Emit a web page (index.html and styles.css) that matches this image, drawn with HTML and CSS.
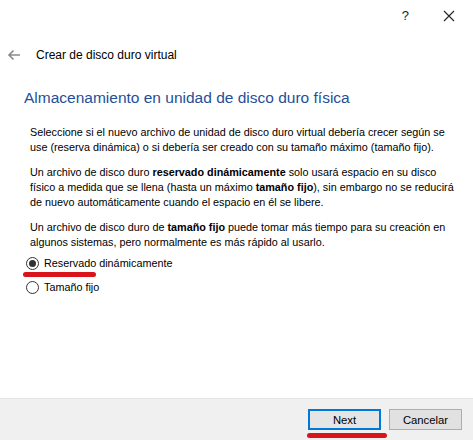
FILE: index.html
```html
<!DOCTYPE html>
<html lang="es">

<head>
  <meta charset="UTF-8" />
  <title>Crear de disco duro virtual</title>
  <link rel="stylesheet" href="styles.css">
</head>

<body>

  <div class="wizard">
    <div class="titlebar">
      <span class="help">?</span>
      <span class="close">
        <svg width="12" height="12" viewBox="0 0 12 12">
          <path d="M1 1 L11 11 M11 1 L1 11" stroke="#222" stroke-width="1.1" fill="none" />
        </svg>
      </span>
    </div>

    <div class="header">
      <span class="back">
        <svg width="14" height="12" viewBox="0 0 14 12">
          <path d="M13 6 H2 M6.5 1.5 L2 6 L6.5 10.5" stroke="#8a8a8a" stroke-width="1.6" fill="none" />
        </svg>
      </span>
      <span class="header-title">Crear de disco duro virtual</span>
    </div>

    <div class="page">
      <h1>Almacenamiento en unidad de disco duro física</h1>

      <div class="text">
        <p>Seleccione si el nuevo archivo de unidad de disco duro virtual debería crecer según se<br>
          use (reserva dinámica) o si debería ser creado con su tamaño máximo (tamaño fijo).</p>
        <p>Un archivo de disco duro <b>reservado dinámicamente</b> solo usará espacio en su disco<br>
          físico a medida que se llena (hasta un máximo <b>tamaño fijo</b>), sin embargo no se reducirá<br>
          de nuevo automáticamente cuando el espacio en él se libere.</p>
        <p>Un archivo de disco duro de <b>tamaño fijo</b> puede tomar más tiempo para su creación en<br>
          algunos sistemas, pero normalmente es más rápido al usarlo.</p>
      </div>

      <div class="options">
        <label class="option marked">
          <span class="radio checked"></span>
          <span>Reservado dinámicamente</span>
        </label>
        <label class="option">
          <span class="radio"></span>
          <span>Tamaño fijo</span>
        </label>
      </div>
    </div>

    <div class="footer">
      <button class="btn primary marked">Next</button>
      <button class="btn">Cancelar</button>
    </div>
  </div>

</body>

</html>
```

FILE: styles.css
```css
body {
  margin: 0;
  padding: 0;
  background: #ffffff;
  font-family: 'Liberation Sans', Arial, sans-serif;
  color: #000;
}

.wizard {
  width: 473px;
  height: 440px;
  display: flex;
  flex-direction: column;
}

.titlebar {
  height: 31px;
  display: flex;
  justify-content: flex-end;
  align-items: center;
  gap: 34px;
  padding: 0 18px 0 0;
}

.help {
  font-size: 13px;
  color: #222;
}

.close {
  display: flex;
}

.header {
  display: flex;
  align-items: center;
  gap: 15px;
  padding: 14px 0 0 7px;
  height: 20px;
}

.back {
  display: flex;
}

.header-title {
  font-size: 12px;
}

.page {
  flex: 1;
  padding: 0 10px 0 24px;
}

h1 {
  margin: 23px 0 0 0;
  font-size: 15.5px;
  line-height: 19px;
  font-weight: normal;
  color: #1f4f98;
}

.text {
  margin: 18px 0 0 6px;
  font-size: 10.8px;
  line-height: 15px;
  white-space: nowrap;
}

.text p {
  margin: 0 0 10px 0;
}

.text p:last-child {
  margin-bottom: 6px;
}

.text b {
  font-weight: bold;
}

.options {
  display: flex;
  flex-direction: column;
  gap: 10px;
}

.option {
  display: flex;
  align-items: center;
  gap: 5px;
  font-size: 10.8px;
  line-height: 14px;
  position: relative;
}

.radio {
  width: 11px;
  height: 11px;
  border: 1px solid #333;
  border-radius: 50%;
  background: #fff;
  display: flex;
  align-items: center;
  justify-content: center;
  margin-left: 2px;
}

.radio.checked::after {
  content: '';
  width: 7px;
  height: 7px;
  border-radius: 50%;
  background: #333;
}

/* red marker strokes under the picked option and the Next button */
.option.marked::after {
  content: '';
  position: absolute;
  left: -1px;
  top: 16px;
  width: 73px;
  height: 5px;
  border-radius: 3px;
  background: #d9141b;
}

.footer {
  height: 42px;
  background: #f0f0f0;
  border-top: 1px solid #e3e3e3;
  display: flex;
  justify-content: flex-end;
  align-items: flex-start;
  gap: 8px;
  padding: 10px 11px 0 0;
  box-sizing: border-box;
}

.btn {
  width: 73px;
  height: 21px;
  font-family: 'Liberation Sans', Arial, sans-serif;
  font-size: 11.3px;
  font-weight: normal;
  color: #000;
  background: #e1e1e1;
  border: 1px solid #adadad;
  padding: 0;
  position: relative;
}

.btn.primary {
  border: 2px solid #0078d7;
  background: #e5e5e5;
}

.btn.marked::after {
  content: '';
  position: absolute;
  left: -3px;
  top: 22px;
  width: 80px;
  height: 5px;
  border-radius: 3px;
  background: #d9141b;
}
```
